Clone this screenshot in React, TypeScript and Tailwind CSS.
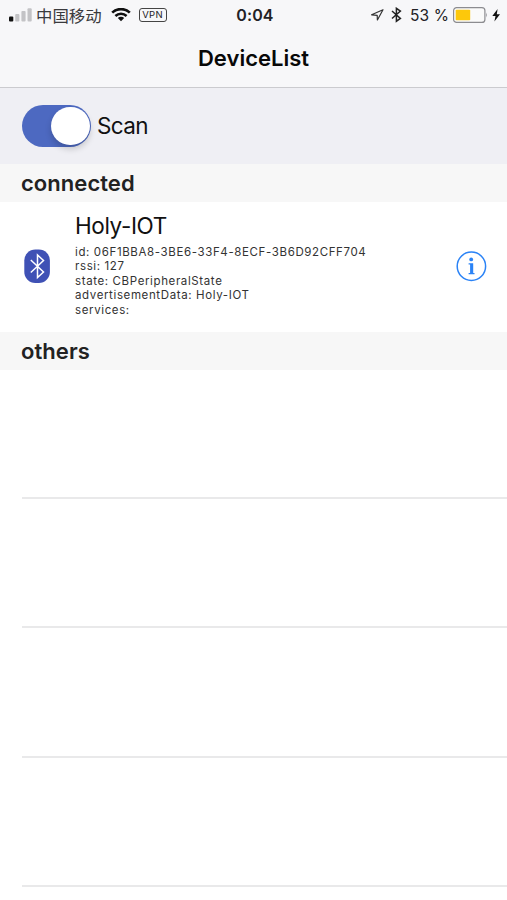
import type { ReactNode } from "react";

const device = {
  name: "Holy-IOT",
  details: [
    "id: 06F1BBA8-3BE6-33F4-8ECF-3B6D92CFF704",
    "rssi: 127",
    "state: CBPeripheralState",
    "advertisementData: Holy-IOT",
    "services:",
  ],
};

function StatusBar() {
  return (
    <div className="flex h-[30px] items-center justify-between pr-[6px] pl-[9px] text-[#222225]">
      <div className="flex w-[160px] items-center">
        <svg width="23" height="14" viewBox="0 0 23 14" className="shrink-0">
          <rect x="0" y="8.5" width="4.3" height="5" rx="1" fill="#111" />
          <rect x="6.2" y="6" width="4.2" height="7.5" rx="1" fill="#c3c3c6" />
          <rect x="12.4" y="3" width="4.2" height="10.5" rx="1" fill="#c3c3c6" />
          <rect x="18.5" y="0.2" width="4.2" height="13.3" rx="1" fill="#c3c3c6" />
        </svg>
        <span className="ml-[4px] shrink-0 pb-px font-['Noto_Sans_CJK_SC',sans-serif] text-[16.4px] leading-[20px] font-normal whitespace-nowrap text-[#3a3a3d]">
          中国移动
        </span>
        {/* Wi-Fi */}
        <svg width="20" height="14" viewBox="0 0 20 14" className="ml-[9px] shrink-0">
          <path d="M1.2 4.7a12.5 12.5 0 0 1 17.6 0" fill="none" stroke="#111" strokeWidth="2.6" />
          <path d="M4.4 8a8 8 0 0 1 11.2 0" fill="none" stroke="#111" strokeWidth="2.5" />
          <path d="M6.8 10.1a4.6 4.6 0 0 1 6.4 0L10 13.3z" fill="#111" />
        </svg>
        <span className="ml-[8px] flex h-[14px] w-[28px] shrink-0 items-center justify-center rounded-[3px] border border-[#444] text-[9.5px] leading-none tracking-[0.3px]">
          VPN
        </span>
      </div>
      <span className="text-[16px] leading-[20px] font-semibold tracking-[0.1px]">0:04</span>
      <div className="flex w-[160px] items-center justify-end">
        {/* Location */}
        <svg width="13" height="12" viewBox="0 0 13 12" className="shrink-0">
          <path d="M12 0.8 0.6 5.8l5.6.6.2 4.6z" fill="none" stroke="#333" strokeWidth="1.2" strokeLinejoin="round" />
        </svg>
        <svg width="11" height="16" viewBox="0 0 11 16" className="ml-[7px] shrink-0">
          <path d="m1 4 8.4 7.4-4 2.8V1.3l4 2.8L1 11.5" fill="none" stroke="#222" strokeWidth="1.5" />
        </svg>
        <span className="ml-[8px] shrink-0 pt-px text-[15.5px] leading-[20px] tracking-[0.1px] whitespace-nowrap">53 %</span>
        <svg width="35" height="16" viewBox="0 0 35 16" className="ml-[4px] shrink-0">
          <rect x="0.6" y="0.6" width="31.3" height="14.8" rx="3" fill="#fafafa" stroke="#8c8c90" strokeWidth="1.2" />
          <rect x="2.7" y="2.7" width="14.5" height="10.6" rx="0.8" fill="#fdc80b" />
          <path d="M33.2 5.5q1.6 2.5 0 5z" fill="#8c8c90" />
        </svg>
        <svg width="9" height="13" viewBox="0 0 9 13" className="ml-[4px] shrink-0">
          <path d="M5.6 0 0.3 7h3.2L2.4 12.4 8 5.2H4.8z" fill="#111" />
        </svg>
      </div>
    </div>
  );
}

function SectionHeader({ children }: { children: ReactNode }) {
  return (
    <h2 className="h-[38px] bg-[#f7f7f7] pl-[21px] text-[22px] leading-[39px] font-semibold tracking-[0.05px] text-[#222]">
      {children}
    </h2>
  );
}

function DeviceRow() {
  return (
    <div className="flex h-[130px] items-center pr-[20px] pb-[2px] pl-[24px]">
      <svg width="27" height="35" viewBox="0 0 27 35" className="shrink-0">
        <rect x="0.3" y="0.5" width="25.6" height="33.5" rx="11" fill="#3f51b5" />
        <path d="m6.8 11 12.7 12-6 5.5V6l6 5.5-12.7 12" fill="none" stroke="#fff" strokeWidth="1.5" />
      </svg>
      <div className="ml-[24px] flex-1 pb-[4px]">
        <h3 className="text-[22.5px] leading-[30px] tracking-[-0.4px] text-[#111]">{device.name}</h3>
        <div className="mt-[4px] text-[11.5px] leading-[14.4px] tracking-[0.62px] text-[#333]">
          {device.details.map((line) => (
            <p key={line} className="whitespace-nowrap">
              {line}
            </p>
          ))}
        </div>
      </div>
      <button aria-label="Device info" className="shrink-0">
        <svg width="32" height="32" viewBox="0 0 32 32">
          <circle cx="16.4" cy="16.2" r="14.2" fill="none" stroke="#2b83f6" strokeWidth="1.5" />
          <circle cx="16.2" cy="9.4" r="1.9" fill="#2b83f6" />
          <path d="M13.6 13.2h4.6v9.8h1.3v1.2h-5.9v-1.2h1.5v-8.6h-1.5z" fill="#2b83f6" />
        </svg>
      </button>
    </div>
  );
}

export default function App() {
  return (
    <div className="h-[900px] w-[507px] overflow-hidden bg-white font-['Inter',sans-serif]">
      <header className="h-[88px] border-b border-[#cbcbcf] bg-[#f7f7f9]">
        <StatusBar />
        <h1 className="text-center text-[22px] leading-[56px] font-semibold text-[#080808]">DeviceList</h1>
      </header>

      <div className="flex h-[76px] items-center bg-[#efeff4] pl-[22px]">
        <button
          role="switch"
          aria-checked="true"
          aria-label="Scan"
          className="flex h-[42px] w-[69px] items-center justify-end rounded-full bg-[#4d69c1] pr-[1.5px]"
        >
          <span className="size-[38.5px] rounded-full bg-white shadow-[0_4px_6px_rgba(0,0,0,0.18)]" />
        </button>
        <span className="ml-[6px] text-[22.5px] leading-[28px] tracking-[-0.6px] text-[#111]">Scan</span>
      </div>

      <SectionHeader>connected</SectionHeader>
      <DeviceRow />
      <SectionHeader>others</SectionHeader>

      {/* Empty rows */}
      <div className="pl-[22px]">
        {[0, 1, 2, 3].map((row) => (
          <div key={row} className="h-[129.5px] border-b-2 border-[#e9e9ea] first:h-[128.5px]" />
        ))}
      </div>
    </div>
  );
}
